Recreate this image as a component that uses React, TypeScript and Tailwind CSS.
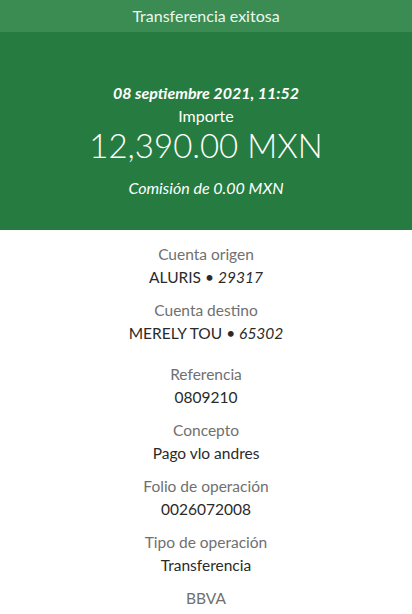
const ACCOUNTS = [
  { label: "Cuenta origen", name: "ALURIS", num: "29317" },
  { label: "Cuenta destino", name: "MERELY TOU", num: "65302" },
];

const DETAILS = [
  { label: "Referencia", value: "0809210" },
  { label: "Concepto", value: "Pago vlo andres" },
  { label: "Folio de operación", value: "0026072008" },
  { label: "Tipo de operación", value: "Transferencia" },
];

export default function App() {
  return (
    <div className="h-[614px] w-[412px] overflow-hidden bg-white font-['Lato','Liberation_Sans',sans-serif]">
      <div className="flex h-8 items-center justify-center bg-[#3a8c52] text-[16px] text-[#eef7ef]">
        Transferencia exitosa
      </div>

      <div className="flex h-[198px] flex-col items-center bg-[#267c40] pt-[50px] text-white">
        <div className="text-[16px] font-bold italic leading-[22px]">08 septiembre 2021, 11:52</div>
        <div className="text-[16px] leading-[24px]">Importe</div>
        <div className="text-[33px] font-light leading-[34px]">12,390.00 MXN</div>
        <div className="mt-[15px] text-[16px] italic leading-[22px]">Comisión de 0.00 MXN</div>
      </div>

      <div className="flex flex-col items-center pt-[13px] text-[15.5px]">
        {ACCOUNTS.map((a) => (
          <div key={a.label} className="mb-[10px] flex flex-col items-center">
            <div className="leading-[23px] text-[#707070]">{a.label}</div>
            <div className="leading-[23px] text-[#2a2a2a]">
              {a.name} • <span className="italic">{a.num}</span>
            </div>
          </div>
        ))}
        <div className="h-2" />
        {DETAILS.map((d) => (
          <div key={d.label} className="mb-[10px] flex flex-col items-center">
            <div className="leading-[23px] text-[#707070]">{d.label}</div>
            <div className="leading-[23px] text-[#2a2a2a]">{d.value}</div>
          </div>
        ))}
        <div className="leading-[23px] text-[#707070]">BBVA</div>
      </div>
    </div>
  );
}
